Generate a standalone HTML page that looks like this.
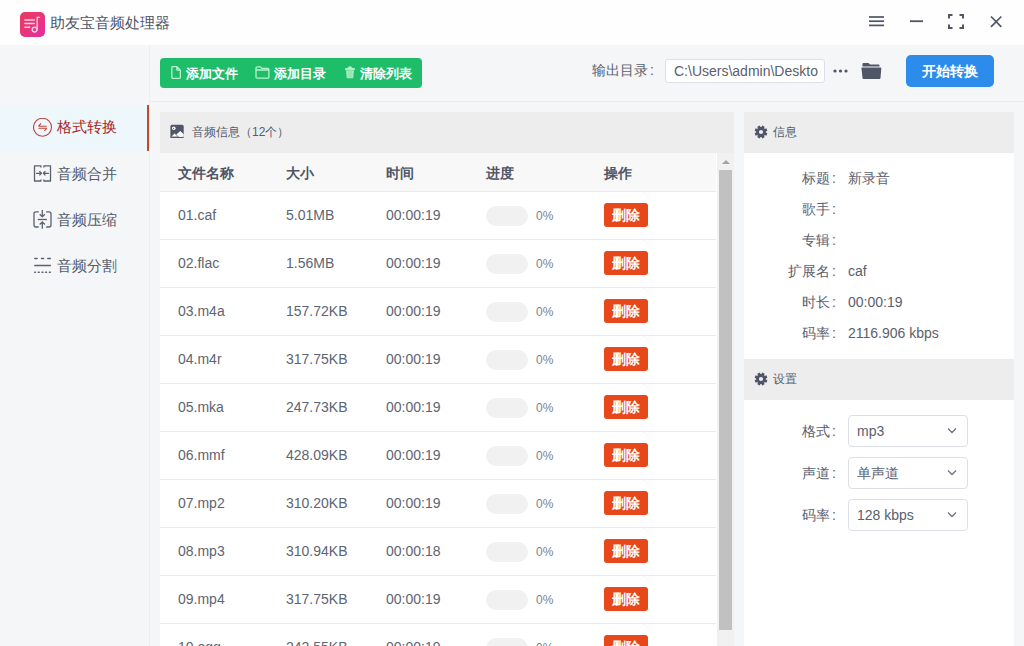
<!DOCTYPE html>
<html><head><meta charset="utf-8">
<style>
*{box-sizing:border-box;margin:0;padding:0}
html,body{width:1024px;height:646px;overflow:hidden;background:#f5f6f8;-webkit-font-smoothing:antialiased;font-family:"Liberation Sans",sans-serif;color:#535a6a}
.abs{position:absolute}
#title{left:0;top:0;width:1024px;height:45px;background:#fefefe}
#logo{left:20px;top:12px;width:25px;height:25px;border-radius:5px;background:linear-gradient(135deg,#e93a62 0%,#e8357a 55%,#e52aa8 100%)}
#apptitle{left:50px;top:12px;font-size:15px;line-height:22px;color:#4e5464;white-space:nowrap}
#side{left:0;top:45px;width:150px;height:601px;background:#f5f6f8;border-right:1px solid #eceef1}
.nav{position:absolute;left:0;width:149px;height:46px}
.nav .t{position:absolute;left:57px;top:12px;font-size:15px;line-height:22px;white-space:nowrap;color:#535a6a}
.nav svg{position:absolute;left:33px}
#toolbar{left:150px;top:45px;width:874px;height:57px;border-bottom:1px solid #e9ebee}
#grp{left:160px;top:58px;width:262px;height:30px;background:#1ebd6a;border-radius:4px}
.gb{position:absolute;top:0;height:30px;line-height:30px;font-size:13px;font-weight:bold;color:#fff;white-space:nowrap}
.gb svg{position:absolute}
#outlabel{left:592px;top:59px;font-size:14px;line-height:22px;color:#5a606e;white-space:nowrap}
#outinput{left:665px;top:59px;width:160px;height:24px;background:#fff;border:1px solid #dcdfe6;border-radius:3px;overflow:hidden}
#outinput span{position:absolute;left:8px;top:1px;font-size:14px;line-height:20px;color:#5a606e;white-space:nowrap}
#startbtn{left:906px;top:55px;width:88px;height:32px;background:#2b8cec;border-radius:5px;color:#fff;font-size:14px;font-weight:bold;text-align:center;line-height:32px}
#listpanel{left:160px;top:112px;width:574px;height:534px;background:#fff}
.ph{position:absolute;left:0;top:0;width:100%;height:41px;background:#ededed}
.ph .t{position:absolute;font-size:12px;line-height:20px;white-space:nowrap;color:#565d6c}
#thead{left:160px;top:153px;width:556px;height:39px;background:#f8f8f9;border-bottom:1px solid #ebebeb}
.th{position:absolute;top:10px;font-size:14px;font-weight:bold;line-height:20px;color:#4f5666;white-space:nowrap}
.row{position:absolute;left:160px;width:556px;height:48px;background:#fff;border-bottom:1px solid #ebebeb}
.row .c{position:absolute;top:13px;font-size:14px;line-height:20px;color:#5e6472;white-space:nowrap}
.row .pill{position:absolute;left:326px;top:14px;width:42px;height:20px;border-radius:10px;background:#f1f1f1}
.row .pct{position:absolute;left:376px;top:14px;font-size:12px;line-height:20px;color:#7b818d}
.row .del{position:absolute;left:444px;top:11px;width:44px;height:24px;border-radius:3px;background:#e8471a;color:#fff;font-size:14px;font-weight:bold;line-height:24px;text-align:center}
#track{left:717px;top:153px;width:17px;height:493px;background:#f1f1f1}
#thumb{left:719px;top:170px;width:13px;height:460px;background:#c1c1c1}
#arrow{left:722px;top:160px;width:0;height:0;border-left:4px solid transparent;border-right:4px solid transparent;border-bottom:4px solid #a3a3a3}
#rpanel{left:744px;top:112px;width:270px;height:534px;background:#fff}
.lab{position:absolute;width:100px;text-align:right;font-size:14px;line-height:20px;color:#5a606e;white-space:nowrap}
.co{display:inline-block;width:14px;text-indent:2px;text-align:left}
.val{position:absolute;left:104px;font-size:14px;line-height:20px;color:#5a606e;white-space:nowrap}
.sel{position:absolute;left:104px;width:120px;height:32px;border:1px solid #dcdfe6;border-radius:4px;background:#fff}
.sel span{position:absolute;left:8px;top:5px;font-size:14px;line-height:20px;color:#5a606e;white-space:nowrap}
.sel svg{position:absolute;right:10px;top:11px}
</style></head><body>
<div id="title" class="abs"></div>
<div id="logo" class="abs">
<svg width="25" height="25" viewBox="0 0 25 25" style="position:absolute;left:0;top:0">
<g stroke="#ffd0e0" stroke-width="1.35" stroke-linecap="round" fill="none">
<line x1="4.8" y1="8" x2="14.3" y2="8"/><line x1="4.8" y1="11.5" x2="14.3" y2="11.5"/><line x1="4.8" y1="15.2" x2="9.8" y2="15.2"/>
<path d="M17.2 17.2 V5.3 H19.5"/><circle cx="14.6" cy="17.6" r="2.4"/>
</g></svg>
</div>
<div id="apptitle" class="abs">助友宝音频处理器</div>
<!-- window controls -->
<svg class="abs" style="left:860px;top:5px" width="150" height="35" viewBox="860 5 150 35">
<g stroke="#4f5565" stroke-width="2" fill="none">
<g stroke-width="1.7"><line x1="869" y1="17" x2="884" y2="17"/><line x1="869" y1="21.2" x2="884" y2="21.2"/><line x1="869" y1="25.4" x2="884" y2="25.4"/></g>
<line x1="910" y1="21.2" x2="923" y2="21.2" stroke-width="1.8"/>
<path d="M949 18.5 V15 H952.5 M959.5 15 H963 V18.5 M963 24.5 V28 H959.5 M952.5 28 H949 V24.5"/>
<path d="M991 16.5 L1001.3 26.8 M1001.3 16.5 L991 26.8" stroke-width="1.7"/>
</g></svg>

<div id="side" class="abs"></div>
<div class="nav" style="top:105px;background:#eef7fc">
<svg style="top:13px" width="20" height="20" viewBox="0 0 20 20"><g fill="none" stroke="#c0443c" stroke-width="1.1"><circle cx="9.5" cy="9.2" r="9"/><path d="M5.4 8.3 H13.8 M5.4 8.3 L8 5.4 M13.8 10.3 H5.4 M13.8 10.3 L11.3 13" stroke-width="1.1"/></g></svg>
<div class="t" style="color:#a82626;top:11px">格式转换</div>
<div style="position:absolute;left:147px;top:0;width:2px;height:46px;background:#c04b2b"></div>
</div>
<div class="nav" style="top:151px">
<svg style="top:14px" width="20" height="18" viewBox="0 0 20 18"><g fill="none" stroke="#5b6170" stroke-width="1.3" stroke-linejoin="round"><path d="M7.9 2.4 V0.9 H1.5 V16 H7.9 V14.4 M10.9 2.4 V0.9 H17.5 V16 H10.9 V14.4"/><path d="M3 8.3 H8.1 M6.4 6.2 L8.4 8.3 L6.4 10.4 M15.9 8.3 H10.7 M12.4 6.2 L10.4 8.3 L12.4 10.4"/></g></svg>
<div class="t">音频合并</div>
</div>
<div class="nav" style="top:197px">
<svg style="top:13px" width="20" height="20" viewBox="0 0 20 20"><g fill="none" stroke="#5b6170" stroke-width="1.3" stroke-linejoin="round"><path d="M5.7 1.8 H3 Q1 1.8 1 3.8 V15 Q1 17 3 17 H5.7 M13.1 1.8 H16 Q18 1.8 18 3.8 V15 Q18 17 16 17 H13.1"/><path d="M4.8 9.5 H13.9"/><path d="M9.3 0 V6.6 M6.7 4.2 L9.3 6.7 L11.9 4.2 M9.3 18.8 V12 M6.7 14.5 L9.3 12 L11.9 14.5"/></g></svg>
<div class="t">音频压缩</div>
</div>
<div class="nav" style="top:243px">
<svg style="top:14px" width="20" height="18" viewBox="0 0 20 18"><g fill="none" stroke="#5b6170" stroke-width="1.5" stroke-linecap="round"><path d="M1.8 1.4 H4.1 M8.5 1.4 H10.6 M14.8 1.4 H17.3"/><path d="M1.8 8.5 H17.3"/><path d="M1.7 15.3 H2.4 M5.3 15.3 H6.2 M9 15.3 H9.9 M12.6 15.3 H13.5 M16.4 15.3 H17.3"/></g></svg>
<div class="t">音频分割</div>
</div>

<div id="toolbar" class="abs"></div>
<div id="grp" class="abs">
<div class="gb" style="left:0;width:90px">
<svg style="left:11px;top:8px" width="10" height="13" viewBox="0 0 10 13"><path d="M1.6 0.65 H5.9 L9.35 4.1 V11.6 Q9.35 12.35 8.6 12.35 H1.6 Q0.85 12.35 0.85 11.6 V1.4 Q0.85 0.65 1.6 0.65 Z M5.9 0.65 V4.1 H9.35" fill="none" stroke="#b6f3cb" stroke-width="1.3" stroke-linejoin="round"/></svg>
<span style="position:absolute;left:26px;top:1px">添加文件</span></div>
<div class="gb" style="left:90px;width:90px">
<svg style="left:5px;top:8px" width="15" height="13" viewBox="0 0 15 13"><path d="M2.2 0.85 H5.4 L6.9 2.4 H12.7 Q13.9 2.4 13.9 3.6 V10.9 Q13.9 12.1 12.7 12.1 H2.2 Q1 12.1 1 10.9 V2.05 Q1 0.85 2.2 0.85 Z M1 4 H13.9" fill="none" stroke="#b6f3cb" stroke-width="1.3" stroke-linejoin="round"/></svg>
<span style="position:absolute;left:24px;top:1px">添加目录</span></div>
<div class="gb" style="left:180px;width:82px">
<svg style="left:5px;top:8px" width="10" height="13" viewBox="0 0 10 13"><path d="M0.4 2.6 H9.6 V3.6 H0.4 Z M3.2 2.6 V1.6 Q3.2 0.9 3.9 0.9 H6.1 Q6.8 0.9 6.8 1.6 V2.6" fill="#b6f3cb" stroke="#b6f3cb" stroke-width="0.9"/><path d="M1 4.2 H9 L8.3 11.7 Q8.2 12.2 7.7 12.2 H2.3 Q1.8 12.2 1.7 11.7 Z" fill="#a4e9bd"/><path d="M3.4 5.3 V11 M5 5.3 V11 M6.6 5.3 V11" stroke="#8fdcab" stroke-width="0.6"/></svg>
<span style="position:absolute;left:20px;top:1px">清除列表</span></div>
</div>
<div id="outlabel" class="abs">输出目录<span style="margin-left:2px">:</span></div>
<div id="outinput" class="abs"><div style="position:absolute;left:8px;top:0;width:144px;height:22px;overflow:hidden"><span style="left:0">C:\Users\admin\Desktop</span></div></div>
<svg class="abs" style="left:832px;top:68px" width="17" height="6" viewBox="0 0 17 6"><g fill="#4e5464"><circle cx="3" cy="3" r="1.6"/><circle cx="8.5" cy="3" r="1.6"/><circle cx="14" cy="3" r="1.6"/></g></svg>
<svg class="abs" style="left:861px;top:62px" width="21" height="18" viewBox="0 0 21 18"><path d="M1.5 2 Q1.5 1 2.5 1 H7.5 L9 2.5 H17.5 Q18.5 2.5 18.5 3.5 V4.5 H1.5 Z M0.5 5.5 H19.5 Q20.5 5.5 20.3 6.5 L19.5 16 Q19.4 17 18.4 17 H2.6 Q1.6 17 1.5 16 L0.5 6.5 Q0.4 5.5 0.5 5.5 Z" fill="#4f5668"/></svg>
<div id="startbtn" class="abs">开始转换</div>

<div id="listpanel" class="abs">
<div class="ph">
<svg style="position:absolute;left:10px;top:12px" width="14" height="14" viewBox="0 0 14 14"><rect x="0.4" y="0.8" width="13.3" height="13" rx="1.6" fill="#4f5668"/><path d="M5.8 11 L10.3 6.9 L13.7 10.3 V13 H8.2 Z" fill="#fff"/><path d="M0.8 13 L4.5 9.1 L8.6 13 Z" fill="#fff" stroke="#4f5668" stroke-width="0.7"/><rect x="0.4" y="12.9" width="13.3" height="0.9" fill="#4f5668"/><circle cx="3.8" cy="4.3" r="1.8" fill="#fff"/><circle cx="3.6" cy="4.3" r="0.6" fill="#4f5668"/></svg>
<div class="t" style="left:32px;top:10px">音频信息（12个）</div>
</div>
</div>
<div id="thead" class="abs">
<div class="th" style="left:18px">文件名称</div>
<div class="th" style="left:126px">大小</div>
<div class="th" style="left:226px">时间</div>
<div class="th" style="left:326px">进度</div>
<div class="th" style="left:444px">操作</div>
</div>
<div id="rows">
<div class="row" style="top:192px"><div class="c" style="left:18px">01.caf</div><div class="c" style="left:126px">5.01MB</div><div class="c" style="left:226px">00:00:19</div><div class="pill"></div><div class="pct">0%</div><div class="del">删除</div></div>
<div class="row" style="top:240px"><div class="c" style="left:18px">02.flac</div><div class="c" style="left:126px">1.56MB</div><div class="c" style="left:226px">00:00:19</div><div class="pill"></div><div class="pct">0%</div><div class="del">删除</div></div>
<div class="row" style="top:288px"><div class="c" style="left:18px">03.m4a</div><div class="c" style="left:126px">157.72KB</div><div class="c" style="left:226px">00:00:19</div><div class="pill"></div><div class="pct">0%</div><div class="del">删除</div></div>
<div class="row" style="top:336px"><div class="c" style="left:18px">04.m4r</div><div class="c" style="left:126px">317.75KB</div><div class="c" style="left:226px">00:00:19</div><div class="pill"></div><div class="pct">0%</div><div class="del">删除</div></div>
<div class="row" style="top:384px"><div class="c" style="left:18px">05.mka</div><div class="c" style="left:126px">247.73KB</div><div class="c" style="left:226px">00:00:19</div><div class="pill"></div><div class="pct">0%</div><div class="del">删除</div></div>
<div class="row" style="top:432px"><div class="c" style="left:18px">06.mmf</div><div class="c" style="left:126px">428.09KB</div><div class="c" style="left:226px">00:00:19</div><div class="pill"></div><div class="pct">0%</div><div class="del">删除</div></div>
<div class="row" style="top:480px"><div class="c" style="left:18px">07.mp2</div><div class="c" style="left:126px">310.20KB</div><div class="c" style="left:226px">00:00:19</div><div class="pill"></div><div class="pct">0%</div><div class="del">删除</div></div>
<div class="row" style="top:528px"><div class="c" style="left:18px">08.mp3</div><div class="c" style="left:126px">310.94KB</div><div class="c" style="left:226px">00:00:18</div><div class="pill"></div><div class="pct">0%</div><div class="del">删除</div></div>
<div class="row" style="top:576px"><div class="c" style="left:18px">09.mp4</div><div class="c" style="left:126px">317.75KB</div><div class="c" style="left:226px">00:00:19</div><div class="pill"></div><div class="pct">0%</div><div class="del">删除</div></div>
<div class="row" style="top:624px"><div class="c" style="left:18px">10.ogg</div><div class="c" style="left:126px">242.55KB</div><div class="c" style="left:226px">00:00:19</div><div class="pill"></div><div class="pct">0%</div><div class="del">删除</div></div>
</div>
<div id="track" class="abs"></div>
<div id="arrow" class="abs"></div>
<div id="thumb" class="abs"></div>

<div id="rpanel" class="abs">
<div class="ph">
<svg style="position:absolute;left:10px;top:13px" width="14" height="14" viewBox="0 0 14 14"><path fill="#4f5668" fill-rule="evenodd" d="M11.88 7.47 L13.39 8.18 L12.36 10.68 L10.78 10.12 L10.12 10.78 L10.68 12.36 L8.18 13.39 L7.47 11.88 L6.53 11.88 L5.82 13.39 L3.32 12.36 L3.88 10.78 L3.22 10.12 L1.64 10.68 L0.61 8.18 L2.12 7.47 L2.12 6.53 L0.61 5.82 L1.64 3.32 L3.22 3.88 L3.88 3.22 L3.32 1.64 L5.82 0.61 L6.53 2.12 L7.47 2.12 L8.18 0.61 L10.68 1.64 L10.12 3.22 L10.78 3.88 L12.36 3.32 L13.39 5.82 L11.88 6.53Z M9.1 7 A2.1 2.1 0 1 0 4.9 7 A2.1 2.1 0 1 0 9.1 7Z"/></svg>
<div class="t" style="left:29px;top:10px">信息</div>
</div>
<div class="lab" style="top:56px">标题<span class="co">:</span></div><div class="val" style="top:56px">新录音</div>
<div class="lab" style="top:87px">歌手<span class="co">:</span></div><div class="val" style="top:87px"></div>
<div class="lab" style="top:118px">专辑<span class="co">:</span></div><div class="val" style="top:118px"></div>
<div class="lab" style="top:149px">扩展名<span class="co">:</span></div><div class="val" style="top:149px">caf</div>
<div class="lab" style="top:180px">时长<span class="co">:</span></div><div class="val" style="top:180px">00:00:19</div>
<div class="lab" style="top:211px">码率<span class="co">:</span></div><div class="val" style="top:211px">2116.906 kbps</div>
<div class="ph" style="top:247px">
<svg style="position:absolute;left:10px;top:13px" width="14" height="14" viewBox="0 0 14 14"><path fill="#4f5668" fill-rule="evenodd" d="M11.88 7.47 L13.39 8.18 L12.36 10.68 L10.78 10.12 L10.12 10.78 L10.68 12.36 L8.18 13.39 L7.47 11.88 L6.53 11.88 L5.82 13.39 L3.32 12.36 L3.88 10.78 L3.22 10.12 L1.64 10.68 L0.61 8.18 L2.12 7.47 L2.12 6.53 L0.61 5.82 L1.64 3.32 L3.22 3.88 L3.88 3.22 L3.32 1.64 L5.82 0.61 L6.53 2.12 L7.47 2.12 L8.18 0.61 L10.68 1.64 L10.12 3.22 L10.78 3.88 L12.36 3.32 L13.39 5.82 L11.88 6.53Z M9.1 7 A2.1 2.1 0 1 0 4.9 7 A2.1 2.1 0 1 0 9.1 7Z"/></svg>
<div class="t" style="left:29px;top:10px">设置</div>
</div>
<div class="lab" style="top:309px">格式<span class="co">:</span></div><div class="sel" style="top:303px"><span>mp3</span><svg width="10" height="7" viewBox="0 0 10 7"><path d="M1 1.5 L5 5.5 L9 1.5" fill="none" stroke="#6b7180" stroke-width="1.3"/></svg></div>
<div class="lab" style="top:351px">声道<span class="co">:</span></div><div class="sel" style="top:345px"><span>单声道</span><svg width="10" height="7" viewBox="0 0 10 7"><path d="M1 1.5 L5 5.5 L9 1.5" fill="none" stroke="#6b7180" stroke-width="1.3"/></svg></div>
<div class="lab" style="top:393px">码率<span class="co">:</span></div><div class="sel" style="top:387px"><span>128 kbps</span><svg width="10" height="7" viewBox="0 0 10 7"><path d="M1 1.5 L5 5.5 L9 1.5" fill="none" stroke="#6b7180" stroke-width="1.3"/></svg></div>
</div>
</body></html>
